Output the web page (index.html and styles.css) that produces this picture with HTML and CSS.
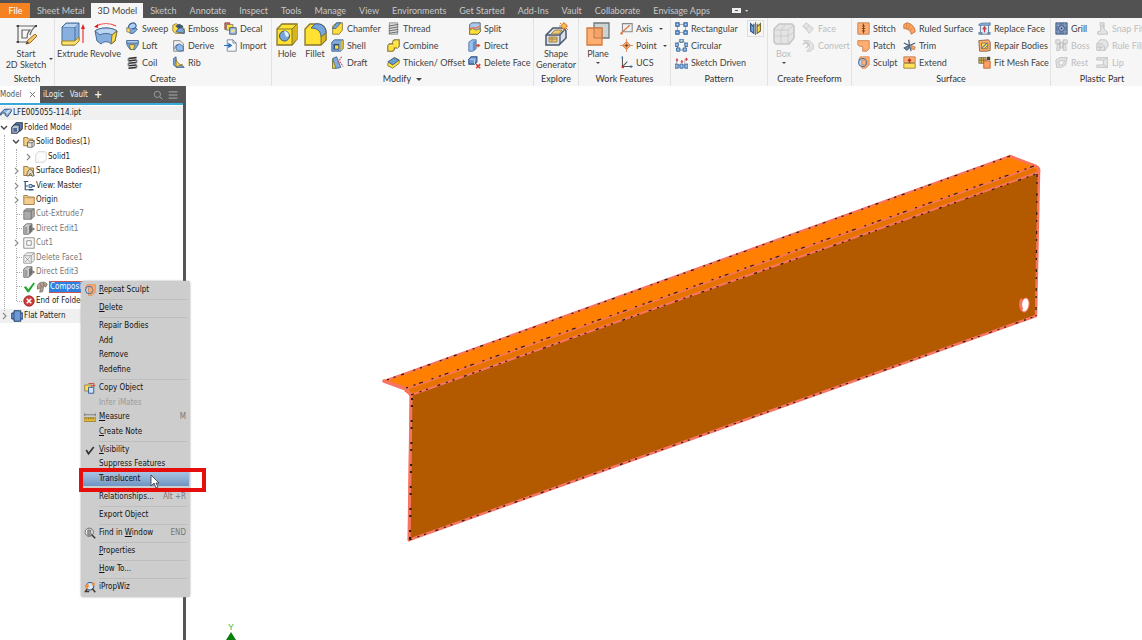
FILE: index.html
```
<!DOCTYPE html>
<html lang="en">
<head>
<meta charset="utf-8">
<title>LFE005055-114.ipt</title>
<link rel="stylesheet" href="styles.css">
</head>
<body>
<svg class="sprite" aria-hidden="true">
  <symbol id="sketch" viewBox="0 0 24 24"><path d="M4 3v18M2 4h20M2 20h11M22 4c-3 2-5 5-6 9" fill="none" stroke="#666" stroke-width="1.2"/><path d="M8 8h8c-2 2-3 4-3 8H8z" fill="none" stroke="#666" stroke-width="1.2"/><path d="M3 3h2v2H3zM3 19h2v2H3zM21 3h2v2h-2z" fill="#444"/><path d="M12 22l2-4 7-6 2 2-7 7z" fill="#f6c766" stroke="#9b6a2f"/><path d="M12 22l1-3 2 2z" fill="#444"/></symbol>
  <symbol id="extrude" viewBox="0 0 24 24"><path d="M1 5l4-4h13v17l-4 5H1z" fill="#87b0e0" stroke="#4a6c98"/><path d="M1 5h13v17M14 5l4-4" fill="none" stroke="#4a6c98"/><path d="M2 5l3-3h12l-3 3z" fill="#bad5f2"/><path d="M1 19h13l4-4v4l-4 4H1z" fill="#ffe36b" stroke="#a78524"/><path d="M22 21V6" stroke="#e44" stroke-width="1.3"/><path d="M20 7l2-5 2 5z" fill="#d22"/></symbol>
  <symbol id="revolve" viewBox="0 0 24 24"><path d="M1 9c5-4 17-4 22 0l-2 10-4 3c-3-3-7-3-10 0l-4-3z" fill="#86afdf" stroke="#4a6c98"/><path d="M1 9c5-4 17-4 22 0l-5 4c-3-2-9-2-12 0z" fill="#bad5f2" stroke="#4a6c98"/><path d="M18 13l5-4-2 10-4 3z" fill="#f9d84a" stroke="#8c741f"/><path d="M2 4c6-3 14-3 20 0" fill="none" stroke="#e33" stroke-width="1.2"/><path d="M0 5l4-3v4z" fill="#d22"/></symbol>
  <symbol id="sweep" viewBox="0 0 16 16"><path d="M1 8l7-4 6 5-5 5H5z" fill="#7fa9dc" stroke="#375b88"/><path d="M3 7c0-5 7-8 9-4s-3 6-5 5" fill="#acd0f5" stroke="#375b88" stroke-width="1.3"/><path d="M1 7l4 1v5l-4-1z" fill="#ffe05c" stroke="#876"/></symbol>
  <symbol id="loft" viewBox="0 0 16 16"><path d="M1 2h14v5l-4 6H5L1 7z" fill="#7ea9dc" stroke="#3d6190"/><path d="M1 2h14v3H1z" fill="#b9d5f4" stroke="#3d6190"/><path d="M4 7h7l-2 6H6z" fill="#ffe05c" stroke="#7a6b35"/></symbol>
  <symbol id="coil" viewBox="0 0 16 16"><path d="M3 3l10-1M3 6l10-1M3 9l10-1M3 12l10-1M3 15l10-1" stroke="#333" stroke-width="2"/><path d="M3 3v3M13 5v3M3 9v3M13 11v3" stroke="#777" stroke-width="2"/></symbol>
  <symbol id="emboss" viewBox="0 0 16 16"><path d="M1 4l4-2 10 6v6H4l-3-3z" fill="#ffdf49" stroke="#88713b"/><path d="M4 5l5-3 5 3-4 5z" fill="#405675"/><path d="M5 12c3-6 8-6 10-2v4z" fill="#79a5d8" stroke="#33537b"/></symbol>
  <symbol id="derive" viewBox="0 0 16 16"><path d="M2 2h8l4 4v9H2z" fill="#eee" stroke="#777"/><path d="M5 8l4-2 5 3v5l-5 1-4-2z" fill="#91b9e8" stroke="#45688f"/><path d="M3 12c1-4 3-5 5-5" fill="none" stroke="#235f9e"/></symbol>
  <symbol id="rib" viewBox="0 0 16 16"><path d="M2 3l3-2v8l8 3 2 2H5l-3-3z" fill="#80aadb" stroke="#375b88"/><path d="M5 4c1 4 4 7 8 7l-8 2z" fill="#ffdf49" stroke="#87713a"/></symbol>
  <symbol id="decal" viewBox="0 0 16 16"><path d="M1 1h6v8H1z" fill="#e9695f" stroke="#844"/><path d="M3 3h8v7H3z" fill="#ffdf49" stroke="#776"/><path d="M7 7h8v8H7z" fill="#a9c9ec" stroke="#345"/><path d="M9 10l4-1v3H9z" fill="#ffe36b"/></symbol>
  <symbol id="import" viewBox="0 0 16 16"><path d="M4 1h7l4 4v10H4z" fill="#f7f9fc" stroke="#6b7888"/><path d="M11 1v4h4" fill="none" stroke="#6b7888"/><path d="M0 8h8M6 6l3 2-3 2z" fill="#2870b8" stroke="#2870b8" stroke-width="1.5"/></symbol>
  <symbol id="hole" viewBox="0 0 24 24"><path d="M2 7l5-5h15v15l-5 6H2z" fill="#ffe131" stroke="#86762d" stroke-width="1.3"/><path d="M17 7v15l5-5V2z" fill="#d9b51d"/><path d="M2 7h15v15M17 7l5-5" fill="none" stroke="#86762d"/><circle cx="9.500" cy="14" r="5" fill="#77a5d7" stroke="#35557b"/><path d="M9 9a5 5 0 0 1 5 5l-3 1z" fill="#e1effc"/></symbol>
  <symbol id="fillet" viewBox="0 0 24 24"><path d="M2 7l5-5h8c5 0 8 4 8 8v8l-5 5H2z" fill="#ffe131" stroke="#86762d" stroke-width="1.3"/><path d="M8 6l4-4c7-1 11 3 11 9l-5 4c0-5-3-9-10-9z" fill="#76a5dc" stroke="#426892"/><path d="M18 15l5-4v7l-5 5z" fill="#dab51d" stroke="#86762d"/></symbol>
  <symbol id="chamfer" viewBox="0 0 16 16"><path d="M2 5l5-4h7v9l-4 5H2z" fill="#ffde39" stroke="#7d7034"/><path d="M2 8l5-7h5l-6 7z" fill="#78a7df" stroke="#3d638f"/></symbol>
  <symbol id="shell" viewBox="0 0 16 16"><path d="M1 4l3-3h11v11l-3 3H1z" fill="#80aadb" stroke="#375b88"/><path d="M3 6h7v7H3z" fill="#345579"/><path d="M5 8h4v4H5z" fill="#ffdf3a"/><path d="M12 4l3-3v11l-3 3z" fill="#dbb732"/></symbol>
  <symbol id="draft" viewBox="0 0 16 16"><path d="M2 3l5-2 5 13-4 1H2z" fill="#80aadb" stroke="#375b88"/><path d="M2 4l4 11H2z" fill="#ffdf3a" stroke="#7d7034"/><path d="M13 1l-5 8M11 7l4 6" stroke="#d64545" stroke-width="1.3" stroke-dasharray="2 1"/></symbol>
  <symbol id="thread" viewBox="0 0 16 16"><path d="M3 1h10v14H3z" fill="#ddd" stroke="#888"/><path d="M2 5l12-2M2 8l12-2M2 11l12-2M2 14l12-2" stroke="#666" stroke-width="1.2"/></symbol>
  <symbol id="combine" viewBox="0 0 16 16"><path d="M1 8l2-2h4V3l2-2h6v8l-2 2H9v2l-2 2H1z" fill="#ffdf39" stroke="#7d7034" stroke-width="1.3"/><path d="M7 4h6v7M2 8h5" fill="none" stroke="#fff08c"/></symbol>
  <symbol id="thicken" viewBox="0 0 16 16"><path d="M1 9l8-7 6 3v4l-8 6-6-3z" fill="#ffdf39" stroke="#7d7034"/><path d="M1 7l8-5 6 3-8 6z" fill="#6b9bd1" stroke="#345579"/></symbol>
  <symbol id="split" viewBox="0 0 16 16"><path d="M2 3l3-2h10v11l-3 3H2z" fill="#a9c8ee" stroke="#456"/><path d="M2 10l4-2 4 2 5-2v4l-3 3H2z" fill="#ffdf39" stroke="#7d7034"/><path d="M1 9c5-5 7 2 13-4" fill="none" stroke="#e56d45" stroke-width="1.5"/></symbol>
  <symbol id="direct" viewBox="0 0 16 16"><path d="M1 4l4-3h5v11l-4 3H1z" fill="#9bc0ec" stroke="#456c9d"/><path d="M6 4l4-3v11l-4 3z" fill="#6592c9"/><path d="M10 8h5M12.500 6v4" stroke="#d24a36" stroke-width="1.6"/></symbol>
  <symbol id="delface" viewBox="0 0 16 16"><path d="M1 4l3-3h7v6l-3 3H1z" fill="#6b9bd7" stroke="#33527c" stroke-width="1.3"/><path d="M2 4h6v6" fill="none" stroke="#c5def7"/><path d="M10 10l5 5M15 10l-5 5" stroke="#cf3e2b" stroke-width="1.800"/></symbol>
  <symbol id="shape" viewBox="0 0 24 24"><path d="M2 13l7-7h11l2 3v7l-7 7H2z" fill="#dce1e8" stroke="#495872" stroke-width="1.5"/><path d="M2 13h14l5-6M16 13v9" fill="none" stroke="#495872" stroke-width="1.3"/><path d="M5 15h8v5H5zM7 12l4-4h7l-3 4z" fill="#eac875" stroke="#a8844b"/><path d="M8 15v5M5 17h8" stroke="#a8844b"/><circle cx="20" cy="4" r="2.500" fill="#ffc05c" stroke="#d97829"/><path d="M20 0v1M20 7v2M15 4h2M23 4h1M16 1l1 1M22 6l2 2" stroke="#d97829"/></symbol>
  <symbol id="plane" viewBox="0 0 24 24"><path d="M8 1h15v15H8z" fill="#ccd1d2" stroke="#70787b" stroke-width="1.3"/><path d="M1 6h15v17H1z" fill="#ffae72" stroke="#d37a3d" stroke-width="1.3"/><path d="M8 6h8v10H8z" fill="#f4a267" stroke="#b87a50"/></symbol>
  <symbol id="axis" viewBox="0 0 16 16"><path d="M3 2h12v10H3z" fill="#eee" stroke="#888" stroke-width="1.3"/><path d="M1 14L12 4" stroke="#dc7740" stroke-width="1.6"/><circle cx="2" cy="14" r="1.500" fill="#dc7740"/></symbol>
  <symbol id="point" viewBox="0 0 16 16"><path d="M8 3l5 5-5 5-5-5z" fill="#ffad6c" stroke="#cd7336"/><path d="M8 0v16M0 8h16" stroke="#d9834b"/><circle cx="8" cy="8" r="1.500" fill="#684226"/></symbol>
  <symbol id="ucs" viewBox="0 0 16 16"><path d="M3 1v12h12M3 13l6-6" fill="none" stroke="#555" stroke-width="1.3"/><path d="M2 12h3v3H2z" fill="#c33"/><path d="M2 1l1-1 1 3H2zM13 11l3 2-3 2z" fill="#2675b9"/></symbol>
  <symbol id="rect" viewBox="0 0 16 16"><path d="M3 3h10v10H3z" fill="none" stroke="#99a"/><path d="M1 1h4v4H1zM11 1h4v4h-4zM1 11h4v4H1zM11 11h4v4h-4z" fill="#b8d9fa" stroke="#285f9e" stroke-width="1.4"/></symbol>
  <symbol id="circ" viewBox="0 0 16 16"><circle cx="8" cy="8" r="5.500" fill="none" stroke="#6d91b9"/><path d="M6 0h4v4H6zM0 5h4v4H0zM12 5h4v4h-4zM2 11h4v4H2zM10 11h4v4h-4z" fill="#9ac8f5" stroke="#244f84"/><path d="M7 1h2v2H7z" fill="#ffdf49"/></symbol>
  <symbol id="sdriven" viewBox="0 0 16 16"><path d="M2 3v9h10V5" fill="none" stroke="#aaa"/><path d="M0 10h4v5H0zM6 10h4v5H6zM12 10h4v5h-4z" fill="#90bee9" stroke="#315b91"/><path d="M1 5h3M2.500 3v4M7 7h3M8.500 5v4M12 4h4M14 2v4" stroke="#d13e3e" stroke-width="1.3"/></symbol>
  <symbol id="mirror" viewBox="0 0 16 16"><path d="M2 2l4 4V2v12l-4-3z" fill="#78a8de" stroke="#31557f" stroke-width="1.5"/><path d="M14 2l-4 4V2v12l4-3z" fill="#ffe14b" stroke="#746936" stroke-width="1.5"/><path d="M8 0v16" stroke="#d84a3e" stroke-width="1.2"/></symbol>
  <symbol id="box" viewBox="0 0 24 24"><path d="M2 7l5-5h13l2 2v12l-5 6H4l-2-2z" fill="#e4e4e4" stroke="#c5c5c5" stroke-width="1.5"/><path d="M2 8h14v14M16 8l6-5M2 14h14l6-4M9 8v14M9 8l5-6" fill="none" stroke="#cbcbcb"/></symbol>
  <symbol id="face" viewBox="0 0 16 16"><path d="M1 5l4-4 4 3 5 4-5 6-4-5z" fill="#e5e5e5" stroke="#c4c4c4"/><path d="M5 9l4-5M2 5l4 4" stroke="#c4c4c4"/></symbol>
  <symbol id="convert" viewBox="0 0 16 16"><path d="M2 2h7l5 5v5l-4 3H6l4-5z" fill="#e5e5e5" stroke="#c4c4c4"/><path d="M1 7c3-4 6-3 8 0l-4 4" fill="none" stroke="#c4c4c4" stroke-width="1.5"/></symbol>
  <symbol id="stitch" viewBox="0 0 16 16"><path d="M1 1h14v14H1z" fill="#ffad70" stroke="#bd7649"/><path d="M8 2v12M6 5h4M6 8h4M6 11h4" stroke="#70452b" stroke-width="1.2"/></symbol>
  <symbol id="patch" viewBox="0 0 16 16"><path d="M1 2h14v10l-3 3H7V9H3L1 7z" fill="#ffad70" stroke="#cc7841"/></symbol>
  <symbol id="sculpt" viewBox="0 0 16 16"><path d="M4 1h11v10l-4 4H6V5H2z" fill="#ffad70" stroke="#d98650"/><circle cx="7" cy="8" r="5" fill="#b9d4f0" stroke="#4a6990" stroke-width="1.3"/><path d="M6 5h5v5l-2 1H6z" fill="#f9b182" stroke="#c98257"/></symbol>
  <symbol id="ruled" viewBox="0 0 16 16"><path d="M1 3l4-2c6 1 10 6 10 11l-5 3C10 11 6 8 1 8z" fill="#ffa55e" stroke="#bd6d38"/><path d="M5 1l-1 8M9 3l-3 7M12 7l-4 4" fill="none" stroke="#d07e45"/></symbol>
  <symbol id="trim" viewBox="0 0 16 16"><path d="M1 5l7 3 7-3M8 8l2 7M8 8L7 1" fill="none" stroke="#4c6179" stroke-width="1.5"/><path d="M1 11l6-3 1 3-3 3z" fill="#5c86b4" stroke="#38506b"/><path d="M10 8l5 2-1 3-4-1z" fill="#ffad70" stroke="#bd6d38"/></symbol>
  <symbol id="extend" viewBox="0 0 16 16"><path d="M1 1h14v7H1z" fill="#ffad70" stroke="#bd7649"/><path d="M1 9h14v6H1z" fill="#ffe05c" stroke="#91762d"/><path d="M8 9V5M6 6l2-2 2 2" fill="none" stroke="#b52f26" stroke-width="1.6"/></symbol>
  <symbol id="replace" viewBox="0 0 16 16"><path d="M3 3h10v12H3z" fill="#e1edfa" stroke="#4a6990"/><path d="M1 3c3-3 11-1 14-2v3H1zM1 13h4v2H1zM12 13h3v2h-3z" fill="#8db5e2" stroke="#58779c"/><path d="M8 13V7M6 9l2-3 2 3" fill="none" stroke="#c73b31" stroke-width="1.6"/></symbol>
  <symbol id="repair" viewBox="0 0 16 16"><path d="M1 2l12-1 2 3v10l-4 1H2z" fill="#ffb16b" stroke="#75563f"/><path d="M4 5h8v7H5z" fill="#ffe05c" stroke="#866b2e"/><path d="M4 12l7-7M8 12l4-4" stroke="#5774a0" stroke-width="1.3"/></symbol>
  <symbol id="fitmesh" viewBox="0 0 16 16"><path d="M1 2h9v7H1z" fill="#e0bd58" stroke="#765"/><path d="M1 5h9M4 2v7M7 2v7" stroke="#79653a"/><path d="M7 6h8v9H7z" fill="#ff9f5d" stroke="#ad6337"/><path d="M11 1h4v4h-4z" fill="#554334"/></symbol>
  <symbol id="grill" viewBox="0 0 16 16"><path d="M1 1h14v14H1z" fill="#637da5" stroke="#42597f"/><path d="M1 4h14M1 12h14M4 1v14M12 1v14" stroke="#8ea5c9"/><circle cx="8" cy="8" r="3.500" fill="#a6c1e3" stroke="#304465"/><circle cx="8" cy="8" r="1.200" fill="#26344e"/></symbol>
  <symbol id="boss" viewBox="0 0 16 16"><path d="M1 1h5v5H1zM10 1h5v5h-5zM3 6h3v8H2zM10 6h3l1 8h-4zM6 4h4v7H6z" fill="#e3e3e3" stroke="#bdbdbd"/></symbol>
  <symbol id="rest" viewBox="0 0 16 16"><path d="M1 5l5-3h9l-2 9-5 3H2z" fill="#e3e3e3" stroke="#bdbdbd"/><path d="M5 6h7l-3 5H5z" fill="#f8f8f8" stroke="#bdbdbd"/></symbol>
  <symbol id="snap" viewBox="0 0 16 16"><path d="M5 1h5v8l4 3v3H2v-3l4-1z" fill="#e5e5e5" stroke="#bdbdbd"/><path d="M7 3h3v4H7z" fill="#ccc"/></symbol>
  <symbol id="rulef" viewBox="0 0 16 16"><path d="M1 6l4-5h6c3 1 4 4 4 7l-4 6H1z" fill="#e5e5e5" stroke="#bdbdbd"/><path d="M1 6h6c3 1 4 4 4 8M5 8v6M1 10h8" fill="none" stroke="#bdbdbd"/></symbol>
  <symbol id="lip" viewBox="0 0 16 16"><path d="M1 2h13v12H1v-3h8V5H1z" fill="#e5e5e5" stroke="#bdbdbd"/><path d="M10 5l4-3M10 11l4 3" stroke="#bdbdbd"/></symbol>
  <symbol id="chev-r" viewBox="0 0 8 8"><path d="M3 1l3 3-3 3" fill="none" stroke="#888" stroke-width="1.1"/></symbol>
  <symbol id="chev-d" viewBox="0 0 8 8"><path d="M1 2l3 3 3-3" fill="none" stroke="#444" stroke-width="1.4"/></symbol>
  <symbol id="part" viewBox="0 0 16 16"><path d="M0 9l6-6h9v3l-5 7-3-2V8H3l-2 3z" fill="#8db5df" stroke="#2d4d76" stroke-width="1.3"/><path d="M7 8l4-4 4-1-5 6z" fill="#d0e3f7"/></symbol>
  <symbol id="folded" viewBox="0 0 16 16"><path d="M4 4l3-3h8v8l-3 3H4z" fill="#6383ae" stroke="#24344f" stroke-width="1.4"/><path d="M1 7l3-3h7v8l-3 3H1z" fill="#b8c6da" stroke="#24344f" stroke-width="1.4"/><path d="M3 8h5v5H3z" fill="#526d95"/></symbol>
  <symbol id="bodies" viewBox="0 0 16 16"><path d="M1 2h5l1 2h6v9H1z" fill="#f6cf80" stroke="#8f7245" stroke-width="1.2"/><path d="M6 8l3-2h6v7l-3 2H6z" fill="#ece5d7" stroke="#555"/><path d="M6 9h6v6M12 9l3-2" fill="none" stroke="#555"/></symbol>
  <symbol id="sbodies" viewBox="0 0 16 16"><path d="M1 2h5l1 2h7v10H1z" fill="#f6cf80" stroke="#8f7245" stroke-width="1.2"/><path d="M5 14c1-7 4-10 7-7l3 7-3 1-2-4-3 4z" fill="#e1d5c0" stroke="#4b4b4b"/></symbol>
  <symbol id="solid" viewBox="0 0 16 16"><path d="M1 5l3-4h10l1 2v8l-3 4H1z" fill="#fcfcfc" stroke="#c8c8c8"/></symbol>
  <symbol id="view" viewBox="0 0 16 16"><path d="M1 2h6M3 2v11h5M3 8h4" fill="none" stroke="#35567b" stroke-width="1.6"/><path d="M8 6h4v4H8z" fill="#b3d5f5" stroke="#274e79"/><path d="M12 8h4M8 13h6" stroke="#274e79" stroke-width="2"/></symbol>
  <symbol id="folder" viewBox="0 0 16 16"><path d="M1 2h5l1 2h8v10H1z" fill="#f3cd8d" stroke="#a07846" stroke-width="1.2"/><path d="M1 5h14" stroke="#b38d58"/></symbol>
  <symbol id="cut" viewBox="0 0 16 16"><path d="M1 4l3-3h11v10l-4 4H1z" fill="#aaa" stroke="#666"/><path d="M1 4h10v11M11 4l4-3" fill="none" stroke="#666"/></symbol>
  <symbol id="dedit" viewBox="0 0 16 16"><path d="M1 4l4-3h7v10l-4 4H1z" fill="#ccc" stroke="#555"/><path d="M3 5v9M5 5v9" stroke="#777"/><path d="M8 4v11l4-4V1z" fill="#777"/><path d="M10 8h5M13 6l2 2-2 2" fill="none" stroke="#555" stroke-width="1.2"/></symbol>
  <symbol id="cutsq" viewBox="0 0 16 16"><path d="M1 1h14v14H1z" fill="#f7f7f7" stroke="#777"/><path d="M5 5h6v6H5z" fill="#fff" stroke="#777"/></symbol>
  <symbol id="dface" viewBox="0 0 16 16"><path d="M1 5l4-4h10v10l-4 4H1z" fill="#eee" stroke="#888"/><path d="M1 5h10v10M11 5l4-4M3 7l6 6M9 7l-6 6" fill="none" stroke="#888"/></symbol>
  <symbol id="check" viewBox="0 0 16 16"><path d="M1 8l3-1 3 4 7-9 2 1-8 12H6z" fill="#22a82c"/></symbol>
  <symbol id="composite" viewBox="0 0 16 16"><path d="M2 6c2-5 9-6 13-2l-2 4-3-2-1 8-4 1 1-6-4 2z" fill="#baa493" stroke="#6f6258"/><path d="M5 3l3 6M10 2l1 5" stroke="#6f6258"/></symbol>
  <symbol id="end" viewBox="0 0 16 16"><circle cx="8" cy="8" r="7" fill="#cf3b3b" stroke="#8e2424"/><path d="M5 5l6 6M11 5l-6 6" stroke="#fff" stroke-width="2.200"/></symbol>
  <symbol id="flat" viewBox="0 0 16 16"><path d="M4 1h9v3h3v8h-3v3H4v-3H1V4h3z" fill="#6d9ad6" stroke="#233e68" stroke-width="1.3"/><path d="M4 4v8M13 4v8" stroke="#233e68"/></symbol>
  <symbol id="copy" viewBox="0 0 16 16"><path d="M1 4h9v8H1z" fill="#ffdc57" stroke="#8a6b2d"/><path d="M6 7h7v8H6z" fill="#c9e1f9" stroke="#2d578b" stroke-width="1.2"/><path d="M6 2h7v4M11 4l2 2 2-2" fill="none" stroke="#cc5041" stroke-width="1.4"/></symbol>
  <symbol id="measure" viewBox="0 0 16 16"><path d="M1 3v4M15 3v4M1 5h14" stroke="#666"/><path d="M0 9h16v5H0z" fill="#e1b83e" stroke="#9c7925"/><path d="M3 9v2M6 9v2M9 9v2M12 9v2" stroke="#765c1f"/></symbol>
  <symbol id="tick" viewBox="0 0 16 16"><path d="M3 8l3 5 7-9" fill="none" stroke="#333" stroke-width="2.200"/></symbol>
  <symbol id="find" viewBox="0 0 16 16"><circle cx="7" cy="7" r="5.500" fill="#eee" stroke="#666" stroke-width="1.3"/><path d="M5 4h4v4l2 3H5z" fill="#999" stroke="#666"/><path d="M11 11l4 4" stroke="#333" stroke-width="2"/></symbol>
  <symbol id="prop" viewBox="0 0 16 16"><circle cx="8" cy="7" r="5" fill="#d7e9fb" stroke="#345a8e" stroke-width="1.5"/><path d="M1 6l4-3 2 4-4 4zM10 4l3-3 2 3-3 3z" fill="#e79345"/><path d="M11 10l4 5M4 11l-2 3h5" fill="none" stroke="#41382f" stroke-width="2"/></symbol>
  <symbol id="search" viewBox="0 0 16 16"><circle cx="7" cy="7" r="5" fill="none" stroke="#aaa" stroke-width="1.3"/><path d="M11 11l4 4" stroke="#aaa" stroke-width="1.500"/></symbol>
  <symbol id="menu" viewBox="0 0 16 16"><path d="M1 3h14M1 8h14M1 13h14" stroke="#aaa" stroke-width="1.600"/></symbol>
</svg>

<nav class="tabs" aria-label="Ribbon tabs">
  <button class="tab file">File</button><button class="tab">Sheet Metal</button><button class="tab active">3D Model</button><button class="tab">Sketch</button><button class="tab">Annotate</button><button class="tab">Inspect</button><button class="tab">Tools</button><button class="tab">Manage</button><button class="tab">View</button><button class="tab">Environments</button><button class="tab">Get Started</button><button class="tab">Add-Ins</button><button class="tab">Vault</button><button class="tab">Collaborate</button><button class="tab">Envisage Apps</button>
  <button class="display" aria-label="Ribbon display"><svg viewBox="0 0 18 8"><path d="M1 1h9v5H1z" fill="#eee"/><path d="M4 3h3v1H4z" fill="#555"/><path d="M14 3h3l-1 2z" fill="#ddd"/></svg></button>
</nav>

<header class="ribbon">
  <section class="panel p-sketch">
    <div class="tools"><button class="big"><svg><use href="#sketch"/></svg><span>Start<br>2D Sketch</span></button><i class="arrow low"></i></div>
    <h2>Sketch</h2>
  </section>
  <section class="panel p-create">
    <div class="tools">
      <button class="big"><svg><use href="#extrude"/></svg><span>Extrude</span></button>
      <button class="big"><svg><use href="#revolve"/></svg><span>Revolve</span></button>
      <div class="col"><button><svg><use href="#sweep"/></svg>Sweep</button><button><svg><use href="#loft"/></svg>Loft</button><button><svg><use href="#coil"/></svg>Coil</button></div>
      <div class="col"><button><svg><use href="#emboss"/></svg>Emboss</button><button><svg><use href="#derive"/></svg>Derive</button><button><svg><use href="#rib"/></svg>Rib</button></div>
      <div class="col"><button><svg><use href="#decal"/></svg>Decal</button><button><svg><use href="#import"/></svg>Import</button></div>
    </div>
    <h2>Create</h2>
  </section>
  <section class="panel p-modify">
    <div class="tools">
      <button class="big"><svg><use href="#hole"/></svg><span>Hole</span></button>
      <button class="big"><svg><use href="#fillet"/></svg><span>Fillet</span></button>
      <div class="col"><button><svg><use href="#chamfer"/></svg>Chamfer</button><button><svg><use href="#shell"/></svg>Shell</button><button><svg><use href="#draft"/></svg>Draft</button></div>
      <div class="col"><button><svg><use href="#thread"/></svg>Thread</button><button><svg><use href="#combine"/></svg>Combine</button><button><svg><use href="#thicken"/></svg>Thicken/ Offset</button></div>
      <div class="col"><button><svg><use href="#split"/></svg>Split</button><button><svg><use href="#direct"/></svg>Direct</button><button><svg><use href="#delface"/></svg>Delete Face</button></div>
    </div>
    <h2>Modify <i class="arrow wide"></i></h2>
  </section>
  <section class="panel p-explore">
    <div class="tools"><button class="big"><svg><use href="#shape"/></svg><span>Shape<br>Generator</span></button></div>
    <h2>Explore</h2>
  </section>
  <section class="panel p-work">
    <div class="tools">
      <button class="big"><svg><use href="#plane"/></svg><span>Plane</span><i class="arrow"></i></button>
      <div class="col"><button><svg><use href="#axis"/></svg>Axis<i class="arrow side"></i></button><button><svg><use href="#point"/></svg>Point<i class="arrow side"></i></button><button><svg><use href="#ucs"/></svg>UCS</button></div>
    </div>
    <h2>Work Features</h2>
  </section>
  <section class="panel p-pattern">
    <div class="tools">
      <div class="col"><button><svg><use href="#rect"/></svg>Rectangular</button><button><svg><use href="#circ"/></svg>Circular</button><button><svg><use href="#sdriven"/></svg>Sketch Driven</button></div>
      <div class="col"><button class="framed" aria-label="Mirror"><svg><use href="#mirror"/></svg></button></div>
    </div>
    <h2>Pattern</h2>
  </section>
  <section class="panel p-free">
    <div class="tools">
      <button class="big" disabled><svg><use href="#box"/></svg><span>Box</span><i class="arrow"></i></button>
      <div class="col"><button disabled><svg><use href="#face"/></svg>Face</button><button disabled><svg><use href="#convert"/></svg>Convert</button></div>
    </div>
    <h2>Create Freeform</h2>
  </section>
  <section class="panel p-surface">
    <div class="tools">
      <div class="col"><button><svg><use href="#stitch"/></svg>Stitch</button><button><svg><use href="#patch"/></svg>Patch</button><button><svg><use href="#sculpt"/></svg>Sculpt</button></div>
      <div class="col"><button><svg><use href="#ruled"/></svg>Ruled Surface</button><button><svg><use href="#trim"/></svg>Trim</button><button><svg><use href="#extend"/></svg>Extend</button></div>
      <div class="col"><button><svg><use href="#replace"/></svg>Replace Face</button><button><svg><use href="#repair"/></svg>Repair Bodies</button><button><svg><use href="#fitmesh"/></svg>Fit Mesh Face</button></div>
    </div>
    <h2>Surface</h2>
  </section>
  <section class="panel p-plastic">
    <div class="tools">
      <div class="col"><button><svg><use href="#grill"/></svg>Grill</button><button disabled><svg><use href="#boss"/></svg>Boss</button><button disabled><svg><use href="#rest"/></svg>Rest</button></div>
      <div class="col"><button disabled><svg><use href="#snap"/></svg>Snap Fit</button><button disabled><svg><use href="#rulef"/></svg>Rule Fille</button><button disabled><svg><use href="#lip"/></svg>Lip</button></div>
    </div>
    <h2>Plastic Part</h2>
  </section>
</header>

<main class="work">
  <aside class="browser">
    <div class="btabs">
      <button class="btab on">Model <svg class="close" viewBox="0 0 8 8"><path d="M1 1l6 6M7 1l-6 6" stroke="#666"/></svg></button>
      <button class="btab">iLogic</button><button class="btab">Vault</button><button class="btab plus">+</button>
      <span class="fill"></span>
      <button class="bicon" aria-label="Search"><svg><use href="#search"/></svg></button>
      <button class="bicon" aria-label="Menu"><svg><use href="#menu"/></svg></button>
    </div>
    <ul class="tree">
      <li class="doc"><svg class="ic"><use href="#part"/></svg>LFE005055-114.ipt</li>
      <li><svg class="ch"><use href="#chev-d"/></svg><svg class="ic"><use href="#folded"/></svg>Folded Model</li>
      <li class="l1"><svg class="ch"><use href="#chev-d"/></svg><svg class="ic"><use href="#bodies"/></svg>Solid Bodies(1)</li>
      <li class="l2"><svg class="ch"><use href="#chev-r"/></svg><svg class="ic"><use href="#solid"/></svg>Solid1</li>
      <li class="l1"><svg class="ch"><use href="#chev-r"/></svg><svg class="ic"><use href="#sbodies"/></svg>Surface Bodies(1)</li>
      <li class="l1"><svg class="ch"><use href="#chev-r"/></svg><svg class="ic"><use href="#view"/></svg>View: Master</li>
      <li class="l1"><svg class="ch"><use href="#chev-r"/></svg><svg class="ic"><use href="#folder"/></svg>Origin</li>
      <li class="l1 off"><span class="ch stub"></span><svg class="ic"><use href="#cut"/></svg>Cut-Extrude7</li>
      <li class="l1 off"><span class="ch stub"></span><svg class="ic"><use href="#dedit"/></svg>Direct Edit1</li>
      <li class="l1 off"><svg class="ch"><use href="#chev-r"/></svg><svg class="ic"><use href="#cutsq"/></svg>Cut1</li>
      <li class="l1 off"><span class="ch stub"></span><svg class="ic"><use href="#dface"/></svg>Delete Face1</li>
      <li class="l1 off"><span class="ch stub"></span><svg class="ic"><use href="#dedit"/></svg>Direct Edit3</li>
      <li class="l1"><span class="ch stub"></span><svg class="ic"><use href="#check"/></svg><svg class="ic"><use href="#composite"/></svg><span class="sel">Composite1</span></li>
      <li class="l1"><span class="ch stub"></span><svg class="ic"><use href="#end"/></svg>End of Folded</li>
      <li class="flat"><svg class="ch"><use href="#chev-r"/></svg><svg class="ic"><use href="#flat"/></svg>Flat Pattern</li>
    </ul>
  </aside>
  <div class="view">
    <svg class="model" viewBox="186 86 956 554" preserveAspectRatio="xMinYMin meet" role="img" aria-label="Orange sheet metal part">
      <path d="M411 394L1039 172L1036 316L409 540z" fill="#b35900"/>
      <path d="M384 381L1010 156L1036 165Q1040 167 1039 172L411 394L404 389z" fill="#ff7f00"/>
      <path d="M404 391L1033 167L1039 173L411 396z" fill="#e67300"/>
      <g fill="none" stroke="#f87462" stroke-linejoin="round" stroke-linecap="round">
        <path d="M411 395L409 540L1036 316L1039 172Q1040 168 1036 166L1010 156" stroke-width="2.500"/>
        <path d="M384 381L406 389L411 395" stroke-width="3.500"/>
        <path d="M411 395L409 540" stroke-width="3"/>
        <path d="M1010 156L384 381M411 395L1039 172" stroke-width="2"/>
        <path d="M406 389L1034 167" stroke-width="1.500"/>
      </g>
      <g fill="none" stroke="#2b1a0c" stroke-width="1.200" stroke-dasharray="3 6 2 5 2 10">
        <path d="M1010 156L384 381"/><path d="M411 395L1039 173"/><path d="M409 540L1036 316"/>
        <path d="M406 388L1034 166" stroke-dasharray="2 6 2 4 4 9"/>
        <path d="M1037 174L1036 316" stroke-dasharray="3 5 2 9"/>
      </g>
      <path d="M412 398L410 540" fill="none" stroke="#2b1a0c" stroke-width="2" stroke-dasharray="2 5 2 13"/>
      <ellipse cx="1025" cy="305" rx="4" ry="7" transform="rotate(10 1025 305)" fill="#fff" stroke="#f87462"/>
      <path d="M1022 299q-3 5 0 11" fill="none" stroke="#f87462" stroke-width="3"/>
      <path d="M231 632l5 8h-10z" fill="#087f08"/>
      <text class="axis-name" x="228" y="630">Y</text>
    </svg>
  </div>
</main>

<div class="context" role="menu">
  <div class="group"><button><svg><use href="#sculpt"/></svg><span><u>R</u>epeat Sculpt</span></button></div>
  <div class="group"><button><span><u>D</u>elete</span></button></div>
  <div class="group four"><button><span>Repair Bodies</span></button><button><span>Add</span></button><button><span>Remove</span></button><button><span>Redefine</span></button></div>
  <div class="group four"><button><svg><use href="#copy"/></svg><span>Copy Object</span></button><button disabled><span>Infer iMates</span></button><button><svg><use href="#measure"/></svg><span><u>M</u>easure</span><kbd>M</kbd></button><button><span><u>C</u>reate Note</span></button></div>
  <div class="group three"><button><svg><use href="#tick"/></svg><span><u>V</u>isibility</span></button><button><span>Suppress Features</span></button><button class="hover"><span>Translucent</span></button></div>
  <div class="group"><button><span>Relationships...</span><kbd>Alt +R</kbd></button></div>
  <div class="group"><button><span>Export Object</span></button></div>
  <div class="group"><button><svg><use href="#find"/></svg><span>Find in <u>W</u>indow</span><kbd>END</kbd></button></div>
  <div class="group"><button><span><u>P</u>roperties</span></button></div>
  <div class="group"><button><span><u>H</u>ow To...</span></button></div>
  <div class="group"><button><svg><use href="#prop"/></svg><span>iPropWiz</span></button></div>
</div>
<div class="callout"></div>
<svg class="cursor" viewBox="0 0 10 15"><path d="M1 1v11l3-3 2 5 2-1-2-4h3z" fill="#fff" stroke="#333" stroke-width=".8"/></svg>
</body>
</html>
```
FILE: styles.css
```
* { box-sizing: border-box; }
body { margin: 0; height: 100vh; overflow: hidden; display: flex; flex-direction: column; background: #fff; color: #444; font: 9px/11px Lato, "Open Sans", sans-serif; }
button { border: 0; padding: 0; margin: 0; background: none; color: inherit; font: inherit; white-space: nowrap; }
.sprite { position: absolute; width: 0; height: 0; }

.tabs { display: flex; height: 18px; padding-top: 3px; background: #525252; color: #c8c8c8; flex: none; }
.tab { padding: 0 6px 0 7px; }
.tab.file { width: 30px; background: #f58220; color: #fff; }
.tab.active { background: #f6f6f6; color: #444; }
.display { margin-left: 15px; }
.display svg { width: 18px; height: 8px; display: block; }

.ribbon { display: flex; flex: none; height: 68px; background: #f6f6f6; overflow: hidden; }
.panel { flex: none; display: flex; flex-direction: column; border-right: 1px solid #e2e2e2; }
.panel h2 { margin: 0; font-size: 9px; line-height: 14px; font-weight: 400; text-align: center; color: #333; white-space: nowrap; }
.tools { display: flex; height: 55px; padding: 2px 0 0 4px; }
.big { display: flex; flex-direction: column; align-items: center; width: 32px; padding-top: 2px; flex: none; }
.big svg { width: 24px; height: 24px; margin-bottom: 2px; flex: none; }
.col { display: flex; flex-direction: column; flex: none; }
.col button { display: flex; align-items: center; height: 17px; }
.col svg { width: 13px; height: 13px; margin-right: 3px; flex: none; }
button:disabled { color: #bdbdbd; }
.arrow { display: inline-block; width: 0; height: 0; border: 2px solid transparent; border-top-color: #444; border-bottom: 0; }
.arrow.wide { border-width: 3px 3px 0; margin: 0 0 1px 3px; }
.arrow.side { margin-left: 6px; }
.arrow.low { margin-top: 38px; }
.big .arrow { margin-top: 3px; }

.p-sketch { width: 55px; }
.p-sketch .tools { padding-left: 3px; }
.p-sketch .big { width: 46px; }
.p-create { width: 217px; }
.p-create .tools { padding-left: 1px; }
.p-create .big { width: 33px; }
.p-create .col:nth-child(3) { width: 50px; padding-left: 4px; }
.p-create .col:nth-child(4) { width: 52px; }
.p-modify { width: 262px; }
.p-modify .tools { padding-left: 1px; }
.p-modify .big { width: 28px; }
.p-modify .col { width: 56px; padding-left: 2px; }
.p-modify .col:nth-child(4) { width: 81px; }
.p-explore { width: 45px; }
.p-explore .tools { padding-left: 0; }
.p-explore .big { width: 44px; }
.p-work { width: 92px; }
.p-work .big { width: 38px; }
.p-work .tools { padding-left: 0; }
.p-work .col { padding-left: 3px; }
.p-pattern { width: 97px; }
.p-pattern .col:first-child { width: 72px; }
.framed { border: 1px solid #ddd; padding: 0 1px; }
.framed svg { margin: 0; }
.p-free { width: 84px; }
.p-free .tools { padding-left: 0; }
.p-free .big { width: 31px; }
.p-free .col { padding-left: 3px; }
.p-surface { width: 199px; }
.p-surface .tools { padding-left: 5px; }
.p-surface .col:first-child { width: 46px; }
.p-surface .col:nth-child(2) { width: 75px; }
.p-plastic { width: 103px; }
.p-plastic .col:first-child { width: 41px; }

.work { flex: 1; display: flex; min-height: 0; }
.browser { width: 186px; flex: none; border-right: 3px solid #555; font: 8px/10px "DejaVu Sans Condensed", "DejaVu Sans", sans-serif; color: #222; }
.btabs { display: flex; height: 19px; background: #555; color: #eee; border-bottom: 2px solid #39a9dc; }
.btab { padding: 0 3px; }
.btab.on { display: flex; align-items: center; gap: 7px; width: 40px; padding: 0; background: #fff; color: #555; }
.btab.plus { font-size: 11px; font-weight: 700; }
.close { width: 7px; height: 7px; flex: none; }
.fill { flex: 1; }
.bicon { display: flex; align-items: center; padding-right: 5px; }
.bicon svg { width: 10px; height: 10px; }
.tree { position: relative; list-style: none; margin: 1px 0 0; padding: 0; height: 217px; display: grid; grid-auto-rows: 1fr; }
.tree::before, .tree::after { content: ""; position: absolute; border-left: 1px dotted #aaa; left: 4px; top: 29px; bottom: 12px; }
.tree::after { left: 16px; top: 43px; bottom: 22px; }
.tree li { display: flex; align-items: center; white-space: nowrap; overflow: hidden; }
.tree .l1 { padding-left: 12px; }
.tree .l2 { padding-left: 24px; }
.tree .doc, .tree .flat { background: #f0f0f0; }
.tree .off { color: #777; }
.ch { width: 8px; height: 8px; margin-right: 3px; flex: none; background: #fff; position: relative; z-index: 1; }
.ch.stub { height: 1px; border-top: 1px dotted #aaa; margin-left: 5px; width: 5px; margin-right: 1px; }
.flat .ch { background: none; }
.ic { width: 12px; height: 12px; margin-right: 1px; flex: none; }
.sel { background: #2d7fe0; color: #fff; border: 1px solid #c55; height: 12px; line-height: 10px; }
.view { flex: 1; min-width: 0; }
.model { width: 100%; height: auto; display: block; }
.axis-name { font: 9px "Liberation Sans", sans-serif; fill: #4b4; }

.context { position: absolute; left: 81px; top: 281px; width: 109px; padding: 2px 1px 3px; background: #cdcdcd; border-radius: 3px; box-shadow: 0 0 2px #999; color: #111; font: 8px/10px "DejaVu Sans Condensed", "DejaVu Sans", sans-serif; }
.group { display: flex; flex-direction: column; height: 14px; }
.group.four { height: 58px; }
.group.three { height: 43px; }
.group + .group { margin-top: 4px; position: relative; }
.group + .group::before { content: ""; position: absolute; top: -2px; left: 17px; right: 2px; border-top: 1px solid #bebebe; }
.context button { flex: 1; display: flex; align-items: center; padding: 0 3px 0 17px; }
.context svg { width: 12px; height: 12px; margin: 0 3px 0 -15px; flex: none; }
.context kbd { margin-left: auto; font: inherit; color: #777; }
.context button:disabled { color: #999; }
.context .hover { background: linear-gradient(#a9c4e2, #6f95c4); }
.callout { position: absolute; left: 79px; top: 468px; width: 127px; height: 24px; border: 4px solid #e60d0d; }
.cursor { position: absolute; left: 150px; top: 474px; width: 10px; height: 15px; }
```
